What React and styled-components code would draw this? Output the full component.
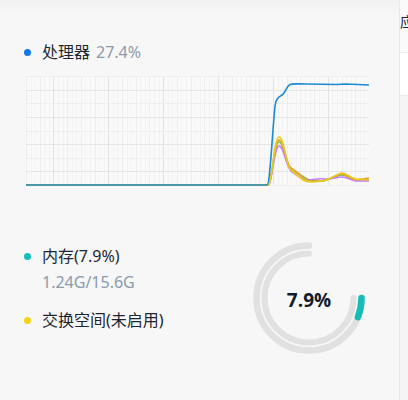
import React from "react";
import styled, { createGlobalStyle } from "styled-components";

const GlobalStyle = createGlobalStyle`
  html, body {
    margin: 0;
    padding: 0;
    background: #f7f7f7;
    font-family: "Noto Sans", "Noto Sans CJK SC", sans-serif;
  }
`;

const CHART_W = 343;
const CHART_H = 110;
const COLS = 25;
const ROWS = 8;

const series = [
  {
    color: "#7cc242",
    d: "M0,109 L242,109 C246,109 248,66 253,66 C258,66 260,90 265,94 C270,98 273,97 278,101 C283,105 288,105 296,105 C304,104 310,99 316,99 C321,99 324,103 330,104 L343,104",
  },
  {
    color: "#c77dff",
    d: "M0,109 L242,109 C246,109 248,70 253,70 C258,70 260,92 266,96 C271,100 276,103 282,104 C288,104 292,102 298,103 C305,104 310,101 316,101 C321,101 324,104 330,105 L343,105",
  },
  {
    color: "#f0a030",
    d: "M0,109 L242,109 C246,109 248,64 253,64 C258,64 260,88 265,92 C269,95 272,96 276,101 C281,106 288,106 296,105 C304,104 310,98 316,98 C321,98 324,103 330,104 L343,102",
  },
  {
    color: "#e8cc1a",
    d: "M0,109 L242,109 C246,109 248,61 253,61 C258,61 260,88 264,93 C269,98 272,100 277,104 C282,107 288,106 296,105 C304,104 310,98 316,97 C321,97 324,102 330,103 L343,104",
  },
  {
    color: "#1a8ad4",
    d: "M0,109 L241,109 C244,109 246,60 249,30 C250,22 253,21 256,19 C259,17 261,10 264,8.5 C266,7.5 270,8 280,8 L310,8.5 L320,8 L343,9",
  },
];

const Page = styled.div`
  display: flex;
  width: 408px;
  height: 400px;
  overflow: hidden;
`;

const Panel = styled.section`
  box-sizing: border-box;
  width: 399px;
  flex-shrink: 0;
  height: 400px;
  padding: 40px 30px 0 24px;
  background: linear-gradient(#f1f1f1 0, #f7f7f7 14px);
`;

const Side = styled.aside`
  flex: 1;
  border-left: 1px solid #e8e8e8;
  background: #f5f5f5;
  overflow: hidden;
`;

const SideTitle = styled.div`
  height: 52px;
  padding-top: 14px;
  box-sizing: border-box;
  background: #fafafa;
  font-size: 14px;
  line-height: 16px;
  color: #1d2733;
  white-space: nowrap;
`;

const SideCard = styled.div`
  height: 42px;
  background: #ffffff;
  border-top: 1px solid #ececec;
  border-bottom: 1px solid #ececec;
`;

const Legend = styled.div`
  display: flex;
  align-items: center;
  height: 24px;
  font-size: 16px;
  line-height: 24px;
  color: #1d2733;
  white-space: nowrap;
  margin-top: ${({ $gap }) => $gap || 0}px;
`;

const Dot = styled.span`
  width: 7px;
  height: 7px;
  border-radius: 50%;
  background: ${({ $color }) => $color};
  margin-left: -0.5px;
  margin-right: 11.5px;
  flex-shrink: 0;
`;

const Muted = styled.span`
  color: #8c9bab;
  margin-left: ${({ $indent }) => $indent || 0}px;
`;

const SubLine = styled.div`
  padding-left: 18px;
  margin-top: 2px;
  font-size: 16px;
  line-height: 24px;
  color: #8c9bab;
`;

const Chart = styled.svg`
  display: block;
  margin: 12px 0 0 2px;
`;

const Bottom = styled.div`
  display: flex;
  align-items: flex-start;
  margin-top: 51px;
`;

const Legends = styled.div`
  padding-top: 7px;
`;

const Gauge = styled.div`
  position: relative;
  width: 120px;
  height: 120px;
  margin-left: auto;
  margin-top: 0.5px;
`;

const GaugeLabel = styled.div`
  position: absolute;
  inset: 0;
  display: flex;
  align-items: center;
  justify-content: center;
  padding-top: 5px;
  font-family: "Open Sans", "Noto Sans", sans-serif;
  font-weight: 700;
  font-size: 19px;
  color: #111c2b;
`;

function Grid() {
  const cw = CHART_W / COLS;
  const rh = 109 / ROWS;
  const lines = [];
  for (let i = 0; i <= COLS; i++) {
    const x = Math.round(i * cw) + 0.5;
    lines.push(
      <line key={"v" + i} x1={x} y1={0} x2={x} y2={109} stroke={i % 4 === 2 ? "#e3e3e3" : "#ededed"} strokeWidth="1" />
    );
    for (let k = 1; k < 3; k++) {
      const xs = Math.round(i * cw + (k * cw) / 3) + 0.5;
      if (i < COLS)
        lines.push(<line key={"vs" + i + k} x1={xs} y1={0} x2={xs} y2={109} stroke="#f3f3f3" strokeWidth="1" />);
    }
  }
  for (let j = 0; j <= ROWS; j++) {
    const y = Math.round(j * rh) + 0.5;
    lines.push(<line key={"h" + j} x1={0} y1={y} x2={CHART_W} y2={y} stroke={j % 2 === 1 ? "#e6e6e6" : "#eeeeee"} strokeWidth="1" />);
  }
  return <g>{lines}</g>;
}

function arc(cx, cy, r, startDeg, endDeg) {
  // degrees, 0 = 3 o'clock, growing counter-clockwise on screen
  const rad = (a) => (a * Math.PI) / 180;
  const sx = cx + r * Math.cos(rad(startDeg));
  const sy = cy - r * Math.sin(rad(startDeg));
  const ex = cx + r * Math.cos(rad(endDeg));
  const ey = cy - r * Math.sin(rad(endDeg));
  const sweep = endDeg - startDeg;
  const large = Math.abs(sweep) > 180 ? 1 : 0;
  const dir = sweep > 0 ? 0 : 1;
  return `M${sx.toFixed(2)},${sy.toFixed(2)} A${r},${r} 0 ${large} ${dir} ${ex.toFixed(2)},${ey.toFixed(2)}`;
}

export default function App() {
  const mem = 7.9;
  const memSweep = (mem / 100) * 270;
  return (
    <Page>
      <GlobalStyle />
      <Panel>
        <Legend>
          <Dot $color="#1677e8" />
          处理器<Muted $indent={6}>27.4%</Muted>
        </Legend>
        <Chart width={CHART_W} height={CHART_H} viewBox={`0 0 ${CHART_W} ${CHART_H}`}>
          <rect x="0" y="0" width={CHART_W} height="109" fill="#f9f9f9" />
          <Grid />
          {series.map((s, i) => (
            <path key={i} d={s.d} fill="none" stroke={s.color} strokeWidth="1.6" strokeLinejoin="round" />
          ))}
        </Chart>
        <Bottom>
          <Legends>
            <Legend>
              <Dot $color="#13bdb8" />
              内存(7.9%)
            </Legend>
            <SubLine>1.24G/15.6G</SubLine>
            <Legend $gap={14}>
              <Dot $color="#f5d21a" />
              交换空间(未启用)
            </Legend>
          </Legends>
          <Gauge>
            <svg width="120" height="120" viewBox="0 0 120 120">
              <path d={arc(60, 60, 52.5, 90, 360)} fill="none" stroke="#e1e1e1" strokeWidth="6.5" strokeLinecap="round" />
              <path d={arc(60, 60, 44.5, 90, 360)} fill="none" stroke="#e1e1e1" strokeWidth="6" strokeLinecap="round" />
              <path d={arc(60, 60, 52.5, 360 - memSweep, 360)} fill="none" stroke="#13bdb8" strokeWidth="6.5" strokeLinecap="round" />
            </svg>
            <GaugeLabel>7.9%</GaugeLabel>
          </Gauge>
        </Bottom>
      </Panel>
      <Side>
        <SideTitle>应用</SideTitle>
        <SideCard />
      </Side>
    </Page>
  );
}
